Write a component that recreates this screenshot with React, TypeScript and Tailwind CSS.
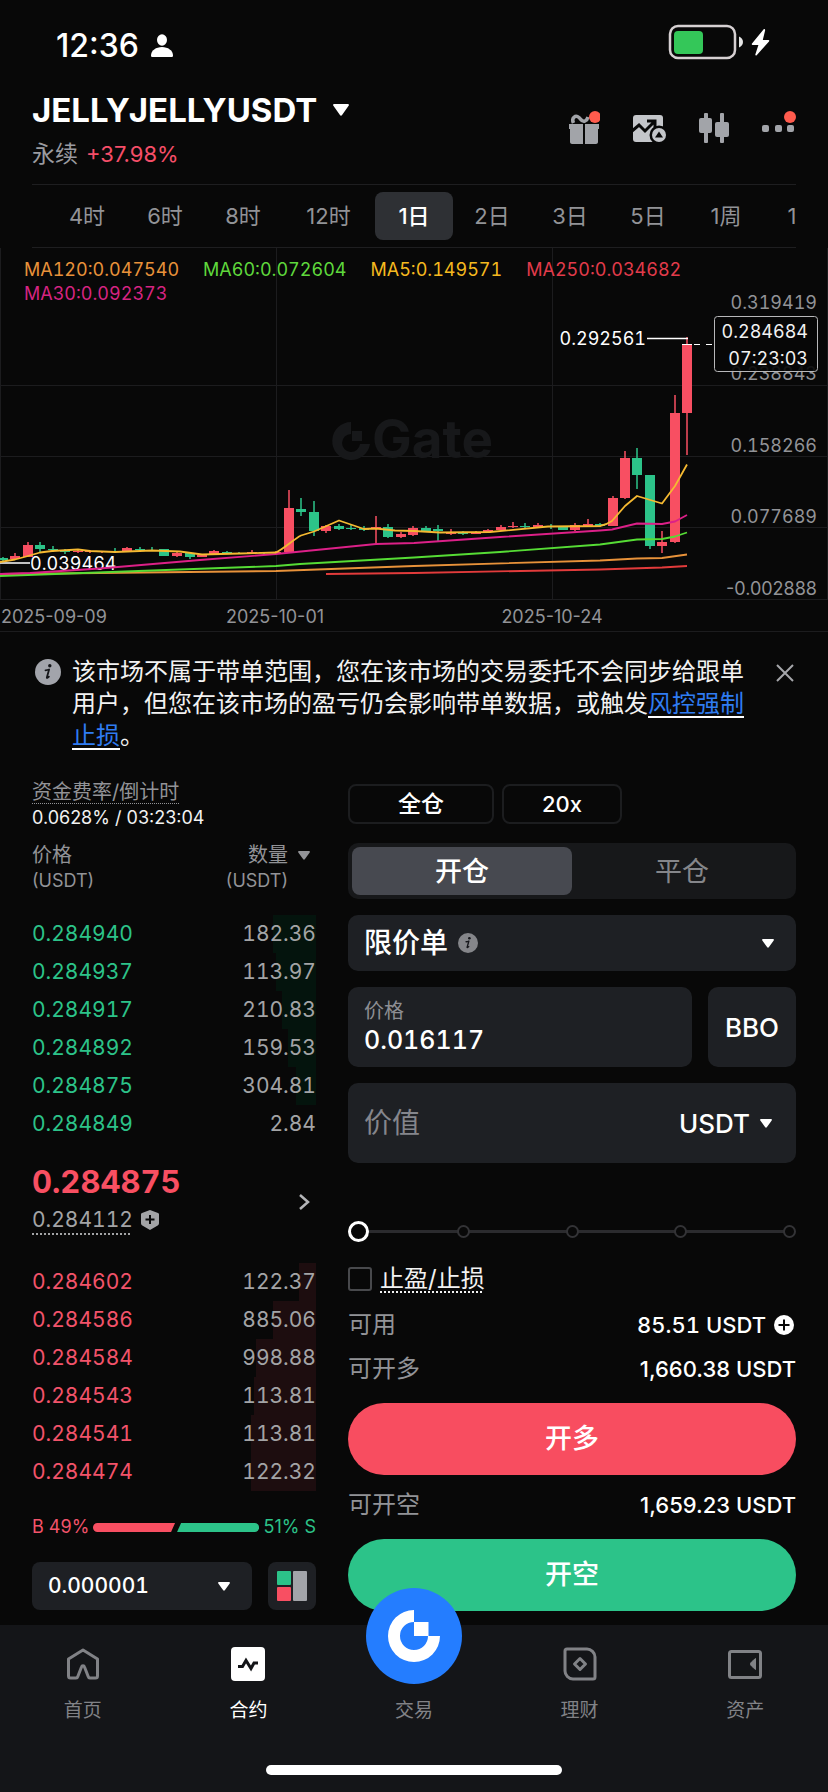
import React from 'react';

const intervals = ['4时', '6时', '8时', '12时', '1日', '2日', '3日', '5日', '1周', '1'];

const averages = [
    { text: 'MA120:0.047540', color: 'text-[#e8923a]' },
    { text: 'MA60:0.072604', color: 'text-[#5fd83c]' },
    { text: 'MA5:0.149571', color: 'text-[#f5b91f]' },
    { text: 'MA250:0.034682', color: 'text-[#e23b4b]' },
    { text: 'MA30:0.092373', color: 'text-[#d62482]' }
];

// [x, high, low, body top, body bottom, rising]
const candles: [number, number, number, number, number, boolean][] = [
    [3, 557, 561, 558, 560, false],
    [15, 553, 559, 556, 559, true],
    [28, 542, 557, 545, 557, true],
    [40, 542, 552, 545, 549, false],
    [53, 546, 552, 549, 550, false],
    [65, 549, 554, 550, 552, false],
    [78, 550, 553, 551, 552, true],
    [90, 550, 553, 551, 552, true],
    [102, 551, 553, 551, 552, true],
    [115, 548, 553, 551, 552, false],
    [127, 547, 552, 548, 551, true],
    [140, 547, 551, 549, 550, false],
    [152, 547, 551, 550, 551, false],
    [164, 549, 556, 549, 556, false],
    [177, 552, 557, 553, 556, true],
    [190, 552, 559, 553, 557, false],
    [202, 554, 557, 555, 557, true],
    [214, 550, 555, 551, 554, true],
    [227, 551, 554, 552, 554, false],
    [239, 552, 554, 553, 554, false],
    [252, 550, 554, 552, 553, true],
    [264, 552, 554, 552, 553, false],
    [276, 551, 553, 552, 553, true],
    [289, 490, 552, 508, 552, true],
    [301, 498, 516, 509, 512, false],
    [314, 501, 536, 512, 531, false],
    [326, 525, 533, 526, 531, true],
    [339, 524, 530, 526, 529, false],
    [351, 525, 530, 528, 529, false],
    [364, 526, 531, 528, 530, false],
    [376, 516, 544, 527, 528, true],
    [388, 524, 538, 527, 537, false],
    [401, 532, 538, 534, 537, true],
    [413, 526, 536, 528, 535, true],
    [426, 526, 532, 528, 531, false],
    [438, 525, 541, 529, 531, false],
    [451, 529, 535, 532, 534, true],
    [463, 531, 535, 532, 534, false],
    [476, 531, 534, 532, 534, true],
    [488, 529, 532, 530, 532, true],
    [501, 525, 531, 527, 530, true],
    [513, 522, 528, 526, 527, true],
    [525, 523, 528, 526, 527, false],
    [538, 523, 528, 525, 527, true],
    [551, 524, 529, 526, 527, false],
    [563, 526, 530, 527, 530, false],
    [575, 523, 531, 525, 530, true],
    [588, 519, 527, 524, 526, true],
    [600, 523, 527, 524, 526, false],
    [613, 496, 526, 498, 526, true],
    [625, 451, 499, 458, 498, true],
    [637, 448, 489, 458, 475, false],
    [650, 475, 549, 475, 546, false],
    [662, 531, 553, 542, 546, true],
    [675, 395, 543, 413, 542, true],
    [687, 337, 455, 344, 413, true]
];

const priceTicks = [
    { y: 309, text: '0.319419' },
    { y: 380, text: '0.238843' },
    { y: 452, text: '0.158266' },
    { y: 523, text: '0.077689' },
    { y: 595, text: '-0.002888' }
];

// depth is the bar's share of the row, in percent
const asks = [
    { price: '0.284940', amount: '182.36', depth: 15 },
    { price: '0.284937', amount: '113.97', depth: 14 },
    { price: '0.284917', amount: '210.83', depth: 12 },
    { price: '0.284892', amount: '159.53', depth: 10 },
    { price: '0.284875', amount: '304.81', depth: 7 },
    { price: '0.284849', amount: '2.84', depth: 0 }
];

const bids = [
    { price: '0.284602', amount: '122.37', depth: 6 },
    { price: '0.284586', amount: '885.06', depth: 15 },
    { price: '0.284584', amount: '998.88', depth: 21 },
    { price: '0.284543', amount: '113.81', depth: 22 },
    { price: '0.284541', amount: '113.81', depth: 23 },
    { price: '0.284474', amount: '122.32', depth: 23 }
];

function Caret({ className = '' }: { className?: string }) {
    return (
        <svg viewBox="0 0 12 9" className={`pointer-events-none ${className}`} fill="currentColor" aria-hidden="true">
            <path d="M1 0h10c.9 0 1.2.8.7 1.4L6.8 8.3c-.4.6-1.2.6-1.6 0L.3 1.4C-.2.8.1 0 1 0Z" />
        </svg>
    );
}

function InfoIcon({ className = '' }: { className?: string }) {
    return (
        <svg viewBox="0 0 26 26" className={className} aria-hidden="true">
            <circle cx="13" cy="13" r="13" fill="currentColor" />
            <circle cx="14.8" cy="6.800" r="1.700" fill="#15161a" />
            <path d="M10.500 11.300c1.500-.1 2.500-.4 3.600-.8l-2.200 7.800c-.3 1 .6 1 2-.6" fill="none" stroke="#15161a" strokeWidth="1.800" strokeLinecap="round" strokeLinejoin="round" />
        </svg>
    );
}

function StatusBar() {
    return (
        <div className="flex h-16 items-center justify-between pt-5 pl-14 pr-[58px]">
            <div className="flex items-center gap-3 pt-2">
                <span className="text-[32px] font-medium leading-9">12:36</span>
                <svg viewBox="0 0 22 24" className="h-6 w-[22px]" fill="currentColor" aria-hidden="true">
                    <ellipse cx="11" cy="6" rx="5" ry="5.8" />
                    <path d="M0 21.5C0 16.500 5 13 11 13s11 3.500 11 8.500c0 1-.6 1.500-1.500 1.500h-19C.6 23 0 22.500 0 21.500Z" />
                </svg>
            </div>
            <svg viewBox="0 0 102 36" className="h-9 w-[102px]" aria-hidden="true">
                <rect x="2" y="2" width="65" height="32" rx="8" fill="none" stroke="#d6d0d2" strokeWidth="2.500" />
                <rect x="6" y="7" width="29" height="23" rx="4" fill="#34c759" />
                <path d="M71 12.500c2.500 1 4 3 4 5.500s-1.500 4.500-4 5.500Z" fill="#e5e5e5" />
                <path d="M95.500 5.500 84 19.600c-.5.700-.2 1.300.6 1.300h5.800l-3 9.300c-.4 1.300.7 1.700 1.500.7L101 17.400c.6-.7.3-1.400-.6-1.400h-5.600l2.300-9.500c.3-1.300-.8-1.900-1.600-1Z" fill="#fff" />
            </svg>
        </div>
    );
}

function Header() {
    return (
        <header className="flex items-center justify-between px-8 pt-[26px] pb-[14px]">
            <div>
                <button className="flex items-center gap-4 leading-10">
                    <span className="text-[33px] font-bold">JELLYJELLYUSDT</span>
                    <Caret className="h-3 w-4" />
                </button>
                <div className="mt-2 flex items-center gap-2 text-[23px] leading-8">
                    <span className="text-[#9a9ba0]">永续</span>
                    <span className="text-[22px] text-[#f64e68]">+37.98%</span>
                </div>
            </div>
            <div className="flex items-center gap-8 pb-1 text-[#a2a4a9]">
                <button aria-label="奖励">
                    <svg viewBox="0 0 32 34" className="h-[34px] w-8">
                        <path d="M5.500 12C3 7 7.500 3.500 11 6.500c2 1.800 3 5 6 3.500 1.800-.8 2.500-2 3-4" fill="none" stroke="currentColor" strokeWidth="3.500" />
                        <path d="M1 13h14v5H1ZM17 13h14v5H17ZM2 18h13v15H4c-1 0-2-1-2-2ZM17 18h13v13c0 1-1 2-2 2H17Z" fill="currentColor" />
                        <circle cx="27" cy="6" r="6" fill="#ff5b4d" />
                    </svg>
                </button>
                <button aria-label="分析">
                    <svg viewBox="0 0 34 34" className="h-[34px] w-[34px]">
                        <rect x="1" y="4" width="30" height="27" rx="3" fill="#c4c6ca" />
                        <path d="m0 20 7-6 6 6 9-9M15 10h8v7" fill="none" stroke="#080808" strokeWidth="3" />
                        <circle cx="27" cy="24" r="9.500" fill="#080808" />
                        <circle cx="27" cy="24" r="7" fill="#c4c6ca" />
                        <path d="m27 20.500 4 6h-8Z" fill="#080808" />
                    </svg>
                </button>
                <button aria-label="K线">
                    <svg viewBox="0 0 32 34" className="h-[34px] w-8" fill="currentColor">
                        <rect x="6" y="2" width="4" height="30" rx="1" />
                        <rect x="1" y="7" width="13" height="15" rx="2" />
                        <rect x="22" y="2" width="4" height="30" rx="1" />
                        <rect x="17" y="11" width="14" height="15" rx="2" />
                    </svg>
                </button>
                <button aria-label="更多">
                    <svg viewBox="0 0 34 34" className="h-[34px] w-[34px]" fill="currentColor">
                        <rect x="0" y="14" width="7" height="7" rx="2" />
                        <rect x="13" y="14" width="7" height="7" rx="2" />
                        <rect x="25" y="14" width="7" height="7" rx="2" />
                        <circle cx="28" cy="6" r="6" fill="#ff5b4d" />
                    </svg>
                </button>
            </div>
        </header>
    );
}

function Intervals() {
    return (
        <div className="mx-8 flex overflow-hidden border-y border-[#1e1e20] py-[7px] pl-4">
            {intervals.map((item) => (
                <button
                    key={item}
                    className={`h-12 shrink-0 rounded-lg text-[22px] ${item === '1日' ? 'bg-[#2e3034] font-medium text-white' : 'text-[#929397]'} ${item === '12时' ? 'w-[93px]' : item === '1' ? 'w-[54px]' : 'w-[78px]'}`}
                >
                    {item}
                </button>
            ))}
        </div>
    );
}

function Chart() {
    return (
        <div className="relative">
            <svg viewBox="0 248 828 384" className="block w-full text-[18px] tabular-nums" fill="none">
                <g stroke="#1c1c1e" strokeWidth="1">
                    <path d="M0 385.500h828M0 456.500h828M0 527.500h828M0 599.500h828M0 631.500h828" />
                    <path d="M.5 248v352M276.500 248v352M552.500 248v352M827.500 248v352" />
                </g>
                <g fill="#17181a">
                    <path d="M351 422v12a9 9 0 1 0 9 10h10a19 19 0 1 1-19-22Z" />
                    <path d="M352 431h10v10h-10Z" />
                    <text x="372" y="458" className="text-[53px] font-bold">Gate</text>
                </g>
                <path d="M0 563h30" stroke="#fff" strokeWidth="1.500" />
                <text x="30" y="570" fill="#fff">0.039464</text>
                {candles.map(([x, high, low, top, bottom, up]) => (
                    <g key={x} fill={up ? '#f84f62' : '#2cc389'}>
                        <rect x={x - 0.75} y={high} width="1.500" height={low - high} />
                        <rect x={x - 5} y={top} width="10" height={bottom - top} />
                    </g>
                ))}
                <g strokeWidth="1.800" strokeLinejoin="round">
                    <path stroke="#e23b3b" d="M326 574 414 573 600 569.500 662 567.500 687 566" />
                    <path stroke="#e8923a" d="M0 574 100 573 276 571 414 566 600 560.500 637 558.500 662 558 687 554.500" />
                    <path stroke="#56dc35" d="M0 576 276 566 300 564 414 557.500 500 552 600 544.500 637 539.500 662 539 675 536.500 687 532.500" />
                    <path stroke="#dc2088" d="M0 574 30 573 100 568.500 200 560 276 554 376 544 414 543 500 537 600 530.500 612 529.500 637 523.500 662 524 675 521.500 687 515" />
                    <path stroke="#f5b931" d="M0 562 15 559.500 28 556 40 552.500 52 551 78 549.500 90 551 115 552 152 550.500 180 551.500 202 554.500 240 553.500 276 552.500C285 548 294 539 301 535.500L314 531.500 339 520.500 364 529 376 528.500 395 530.500 414 531 440 532.500 490 532 548 526.500 600 526C606 525 609 523 612 521L625 506 637 496 662 503.500 675 486 687 464.500" />
                </g>
                <path d="M647 338.500h41" stroke="#fff" strokeWidth="1.500" />
                <path d="M682 344.500h10M694 344.500h6M706 344.500h6" stroke="#fff" />
                <text x="646" y="345" fill="#fff" textAnchor="end">0.292561</text>
                <g fill="#929397" textAnchor="end">
                    {priceTicks.map((tick) => (
                        <text key={tick.text} x="817" y={tick.y} className={tick.text.startsWith('-') ? 'normal-nums' : 'tabular-nums'}>{tick.text}</text>
                    ))}
                </g>
                <rect x="714.500" y="316.500" width="103" height="55" rx="3" fill="#080808" fillOpacity=".9" stroke="#b8b8ba" />
                <g fill="#f2f2f2" textAnchor="end">
                    <text x="808" y="338">0.284684</text>
                    <text x="808" y="365">07:23:03</text>
                </g>
                <g fill="#929397" className="normal-nums">
                    <text x="1" y="623">2025-09-09</text>
                    <text x="275" y="623" textAnchor="middle">2025-10-01</text>
                    <text x="552" y="623" textAnchor="middle">2025-10-24</text>
                </g>
            </svg>
            <div className="absolute inset-x-0 top-0 flex flex-wrap gap-x-6 pt-[10px] pl-6 pr-32 text-[18px] leading-6 tabular-nums">
                {averages.map((item) => (
                    <span key={item.text} className={item.color}>{item.text}</span>
                ))}
            </div>
        </div>
    );
}

function Notice() {
    return (
        <div className="flex items-start pt-6 pl-[35px] pr-8">
            <InfoIcon className="mt-[3px] h-[26px] w-[26px] shrink-0 text-[#a2a4ab]" />
            <p className="ml-[11px] flex-1 text-[24px] leading-8 text-[#f2f2f2]">
                该市场不属于带单范围，您在该市场的交易委托不会同步给跟单用户，但您在该市场的盈亏仍会影响带单数据，或触发
                <a href="#risk" className="text-[#2f7cf2] underline decoration-white decoration-2 underline-offset-4">风控强制止损</a>。
            </p>
            <button aria-label="关闭" className="ml-7 mt-2 mr-[2px] shrink-0 text-[#a6a7ab]">
                <svg viewBox="0 0 18 18" className="h-[18px] w-[18px]" fill="none" stroke="currentColor" strokeWidth="2">
                    <path d="m1 1 16 16M17 1 1 17" />
                </svg>
            </button>
        </div>
    );
}

function BookRows({ rows, label, priceColor, barColor }: { rows: typeof asks; label: string; priceColor: string; barColor: string }) {
    return (
        <table aria-label={label} className="w-full text-[21px] tabular-nums">
            <tbody>
                {rows.map((row) => (
                    <tr key={row.price} className="relative h-[38px]">
                        <td className={`p-0 leading-[38px] ${priceColor}`}>{row.price}</td>
                        <td className="p-0 text-right leading-[38px] text-[#a3a4a6]">
                            <span className={`absolute inset-y-0 right-0 ${barColor}`} style={{ width: `${row.depth}%` }}></span>
                            <span className="relative">{row.amount}</span>
                        </td>
                    </tr>
                ))}
            </tbody>
        </table>
    );
}

function OrderBook() {
    return (
        <section className="flex min-w-0 flex-col">
            <div className="text-[18px] leading-[26px]">
                <div className="text-[20px] text-[#929397]">
                    <span className="underline decoration-dotted decoration-1 underline-offset-4">资金费率/倒计时</span>
                </div>
                <div className="whitespace-nowrap text-[#f2f2f2]">0.0628% / 03:23:04</div>
            </div>
            <div className="mt-3 flex justify-between text-[18px] leading-[25px] text-[#929397]">
                <div>
                    <div className="text-[20px]">价格</div>
                    <div>(USDT)</div>
                </div>
                <button className="flex items-start gap-[10px] pr-[6px] text-right">
                    <span>
                        <span className="block text-[20px]">数量</span>
                        <span className="block">(USDT)</span>
                    </span>
                    <Caret className="mt-2 h-[9px] w-3" />
                </button>
            </div>
            <div className="mt-[22px]">
                <BookRows rows={asks} label="卖盘" priceColor="text-[#2cc389]" barColor="bg-[#04140d]" />
            </div>
            <div className="mt-[19px] flex items-center justify-between">
                <div>
                    <div className="text-[31px] font-bold leading-10 text-[#f84f62] tabular-nums">0.284875</div>
                    <div className="flex items-center gap-2 text-[21px] leading-9 text-[#a3a4a6] tabular-nums">
                        <span className="underline decoration-dotted decoration-2 underline-offset-[6px]">0.284112</span>
                        <svg viewBox="0 0 18 20" className="h-5 w-[18px]" aria-hidden="true">
                            <path d="m9 0 8 3c.6.200 1 .7 1 1.300V13c0 1-.4 2-1.300 2.600L9 20l-7.700-4.400C.4 15 0 14 0 13V4.300C0 3.700.4 3.200 1 3Z" fill="currentColor" />
                            <path d="M9 5v9M4.500 9.500h9" stroke="#080808" strokeWidth="2" />
                        </svg>
                    </div>
                </div>
                <button aria-label="深度" className="pt-1 pr-[6px] text-[#b4b5b8]">
                    <svg viewBox="0 0 12 18" className="h-[18px] w-3" fill="none" stroke="currentColor" strokeWidth="2.500">
                        <path d="m2 2 8 7-8 7" />
                    </svg>
                </button>
            </div>
            <div className="mt-[25px]">
                <BookRows rows={bids} label="买盘" priceColor="text-[#f2536a]" barColor="bg-[#1d0d0f]" />
            </div>
            <div className="mt-6 flex items-center gap-1 text-[18px] leading-6">
                <span className="whitespace-nowrap text-[#f2536a]">B 49%</span>
                <svg viewBox="0 0 166 9" className="h-[9px] min-w-0 flex-1" preserveAspectRatio="none" aria-hidden="true">
                    <path d="M4.500 0H82l-4 9H4.500a4.500 4.500 0 0 1 0-9Z" fill="#f84f62" />
                    <path d="M88 0h73.500a4.500 4.500 0 0 1 0 9H84Z" fill="#2cc389" />
                </svg>
                <span className="whitespace-nowrap text-[#2cc389]">51% S</span>
            </div>
            <div className="mt-[23px] flex gap-4">
                <div className="relative flex-1">
                    <select aria-label="价格精度" className="h-12 w-full appearance-none rounded-lg bg-[#1e2024] pl-4 text-[21px] font-medium text-white tabular-nums">
                        <option>0.000001</option>
                    </select>
                    <Caret className="absolute right-[22px] top-5 h-[9px] w-3" />
                </div>
                <button aria-label="盘口样式" className="flex h-12 w-12 items-center justify-center rounded-lg bg-[#1e2024]">
                    <svg viewBox="0 0 30 30" className="h-[30px] w-[30px]">
                        <rect x="0" y="0" width="14" height="14" rx="1" fill="#2cc389" />
                        <rect x="0" y="16" width="14" height="14" rx="1" fill="#f84f62" />
                        <rect x="16" y="0" width="14" height="30" rx="1" fill="#a2a4a9" />
                    </svg>
                </button>
            </div>
        </section>
    );
}

function OrderForm() {
    return (
        <form className="flex min-w-0 flex-col pt-[5px]">
            <div className="flex gap-2">
                <button type="button" className="h-10 w-[146px] rounded-lg border-2 border-[#1c1d1f] text-[23px] font-medium leading-none">全仓</button>
                <button type="button" className="h-10 w-[120px] rounded-lg border-2 border-[#1c1d1f] text-[22px] font-medium leading-none">20x</button>
            </div>
            <div className="mt-[19px] grid h-14 grid-cols-2 rounded-[10px] bg-[#17181a] p-1 text-[27px]">
                <button type="button" className="rounded-lg bg-[#474950] font-medium leading-none">开仓</button>
                <button type="button" className="rounded-lg leading-none text-[#85868a]">平仓</button>
            </div>
            <div className="relative mt-4">
                <select aria-label="委托类型" className="h-14 w-full appearance-none rounded-[10px] bg-[#1e2024] pl-4 text-[28px] font-medium text-white">
                    <option>限价单</option>
                </select>
                <InfoIcon className="pointer-events-none absolute left-[110px] top-[18px] h-5 w-5 text-[#85868a]" />
                <Caret className="absolute right-[22px] top-6 h-[9px] w-3" />
            </div>
            <div className="mt-4 flex gap-4">
                <div className="flex h-20 min-w-0 flex-1 flex-col justify-center rounded-[10px] bg-[#1e2024] px-4">
                    <label htmlFor="price" className="text-[20px] leading-7 text-[#8d8e93]">价格</label>
                    <input id="price" defaultValue="0.016117" className="h-8 w-full bg-transparent text-[25px] font-medium text-white tabular-nums outline-none" />
                </div>
                <button type="button" className="h-20 w-[88px] rounded-[10px] bg-[#1e2024] text-[26px] font-medium">BBO</button>
            </div>
            <div className="mt-4 flex h-20 items-center justify-between rounded-[10px] bg-[#1e2024] pl-4 pr-6">
                <input aria-label="价值" placeholder="价值" className="min-w-0 flex-1 bg-transparent text-[28px] text-white outline-none placeholder:text-[#85868c]" />
                <button type="button" className="flex items-center gap-[10px] text-[26px] font-medium">
                    USDT
                    <Caret className="h-[9px] w-3" />
                </button>
            </div>
            <div className="relative mt-14 flex h-6 items-center">
                <div className="absolute inset-x-2 h-[3px] bg-[#2b2b2e]"></div>
                <div className="relative flex w-full items-center justify-between">
                    {[0, 25, 50, 75, 100].map((step) => (
                        <span key={step} className="h-[13px] w-[13px] rounded-full border-2 border-[#333336] bg-[#080808]"></span>
                    ))}
                </div>
                <input
                    type="range"
                    aria-label="仓位比例"
                    defaultValue={0}
                    className="absolute inset-x-0 h-6 w-full appearance-none bg-transparent [&::-webkit-slider-thumb]:h-[21px] [&::-webkit-slider-thumb]:w-[21px] [&::-webkit-slider-thumb]:appearance-none [&::-webkit-slider-thumb]:rounded-full [&::-webkit-slider-thumb]:border-3 [&::-webkit-slider-thumb]:border-white [&::-webkit-slider-thumb]:bg-[#080808]"
                />
            </div>
            <div className="mt-6 flex h-6 items-center gap-2">
                <input id="tpsl" type="checkbox" className="h-6 w-6 appearance-none rounded-[3px] border-2 border-[#48494c]" />
                <label htmlFor="tpsl" className="text-[24px] leading-6 text-[#f2f2f2] underline decoration-dotted decoration-2 underline-offset-4">止盈/止损</label>
            </div>
            <div className="mt-[18px] flex items-center justify-between leading-8">
                <span className="text-[24px] text-[#929397]">可用</span>
                <span className="flex items-center gap-2 text-[22px] font-medium tabular-nums">
                    85.51 USDT
                    <button type="button" aria-label="充值" className="mr-[2px]">
                        <svg viewBox="0 0 20 20" className="h-5 w-5">
                            <circle cx="10" cy="10" r="10" fill="#fff" />
                            <path d="M10 4.500v11M4.500 10h11" stroke="#080808" strokeWidth="2" />
                        </svg>
                    </button>
                </span>
            </div>
            <div className="mt-3 flex items-center justify-between leading-8">
                <span className="text-[24px] text-[#929397]">可开多</span>
                <span className="text-[22px] font-medium">1,660.38 USDT</span>
            </div>
            <button type="button" className="mt-[18px] h-[72px] rounded-full bg-[#f84d60] text-[27px] font-medium">开多</button>
            <div className="mt-[14px] flex items-center justify-between leading-8">
                <span className="text-[24px] text-[#929397]">可开空</span>
                <span className="text-[22px] font-medium">1,659.23 USDT</span>
            </div>
            <button type="button" className="mt-[18px] h-[72px] rounded-full bg-[#2cc389] text-[27px] font-medium">开空</button>
        </form>
    );
}

const navIcons = {
    home: (
        <svg viewBox="0 0 34 34" className="h-[34px] w-[34px]" fill="none" stroke="currentColor" strokeWidth="3" strokeLinejoin="round">
            <path d="M17 3 2.500 12v17c0 1.500.5 2 2 2H10c1 0 1.500-.5 1.800-1.500L15.500 20c.5-1.600 2.500-1.600 3 0l3.700 9.500c.3 1 .8 1.500 1.800 1.500h5.500c1.500 0 2-.5 2-2V12Z" />
        </svg>
    ),
    futures: (
        <svg viewBox="0 0 34 34" className="h-[34px] w-[34px]">
            <rect width="34" height="34" rx="4" fill="currentColor" />
            <path d="M7 19.500h4.500l3.500-6 5 8 3-5.500h4" fill="none" stroke="#141518" strokeWidth="3" />
        </svg>
    ),
    trade: <span className="h-[34px]"></span>,
    earn: (
        <svg viewBox="0 0 34 34" className="h-[34px] w-[34px]" fill="none" stroke="currentColor" strokeWidth="3" strokeLinejoin="round">
            <path d="M4 2h20c4 0 8 3.500 8 8v20c0 1.500-.5 2-2 2H10c-4.500 0-8-4-8-8V4c0-1.500.5-2 2-2Z" />
            <path d="m17 11.500 5.500 5.500-5.500 5.500-5.500-5.500Z" />
        </svg>
    ),
    assets: (
        <svg viewBox="0 0 34 34" className="h-[34px] w-[34px]" fill="none" stroke="currentColor" strokeWidth="3" strokeLinejoin="round">
            <rect x="1.500" y="4.500" width="31" height="26" rx="2" />
            <path d="M27.500 11.500v11l-4-3.500c-1.200-1.200-1.200-2.800 0-4Z" fill="currentColor" strokeWidth="1" />
        </svg>
    )
};

const navItems: { key: keyof typeof navIcons; label: string }[] = [
    { key: 'home', label: '首页' },
    { key: 'futures', label: '合约' },
    { key: 'trade', label: '交易' },
    { key: 'earn', label: '理财' },
    { key: 'assets', label: '资产' }
];

function BottomNav() {
    return (
        <nav className="mt-[14px] flex-1 bg-[#141518] pb-4">
            <div className="grid grid-cols-5">
                {navItems.map((item) => (
                    <a
                        key={item.key}
                        href={`#${item.key}`}
                        className={`relative flex flex-col items-center pt-[22px] text-[19px] leading-7 ${item.key === 'futures' ? 'text-white' : 'text-[#818286]'}`}
                    >
                        {navIcons[item.key]}
                        <span className="mt-4">{item.label}</span>
                        {item.key === 'trade' && (
                            <span className="absolute -top-[37px] flex h-24 w-24 items-center justify-center rounded-full bg-[#247dff]">
                                <svg viewBox="0 0 52 52" className="h-[52px] w-[52px]" fill="#fff">
                                    <path d="M26 0v12a14 14 0 1 0 14 14h12A26 26 0 1 1 26 0Z" />
                                    <path d="M26 12h14.500v14H26Z" />
                                </svg>
                            </span>
                        )}
                    </a>
                ))}
            </div>
            <div className="mx-auto mt-10 h-[10px] w-[296px] rounded-full bg-white"></div>
        </nav>
    );
}

export default function App() {
    return (
        <div lang="zh-CN" className="flex min-h-screen flex-col bg-[#080808] font-['Inter','Noto_Sans_CJK_SC',sans-serif] text-white">
            <StatusBar />
            <Header />
            <Intervals />
            <Chart />
            <Notice />
            <main className="mt-[27px] grid grid-cols-[284fr_448fr] gap-8 px-8">
                <OrderBook />
                <OrderForm />
            </main>
            <BottomNav />
        </div>
    );
}
